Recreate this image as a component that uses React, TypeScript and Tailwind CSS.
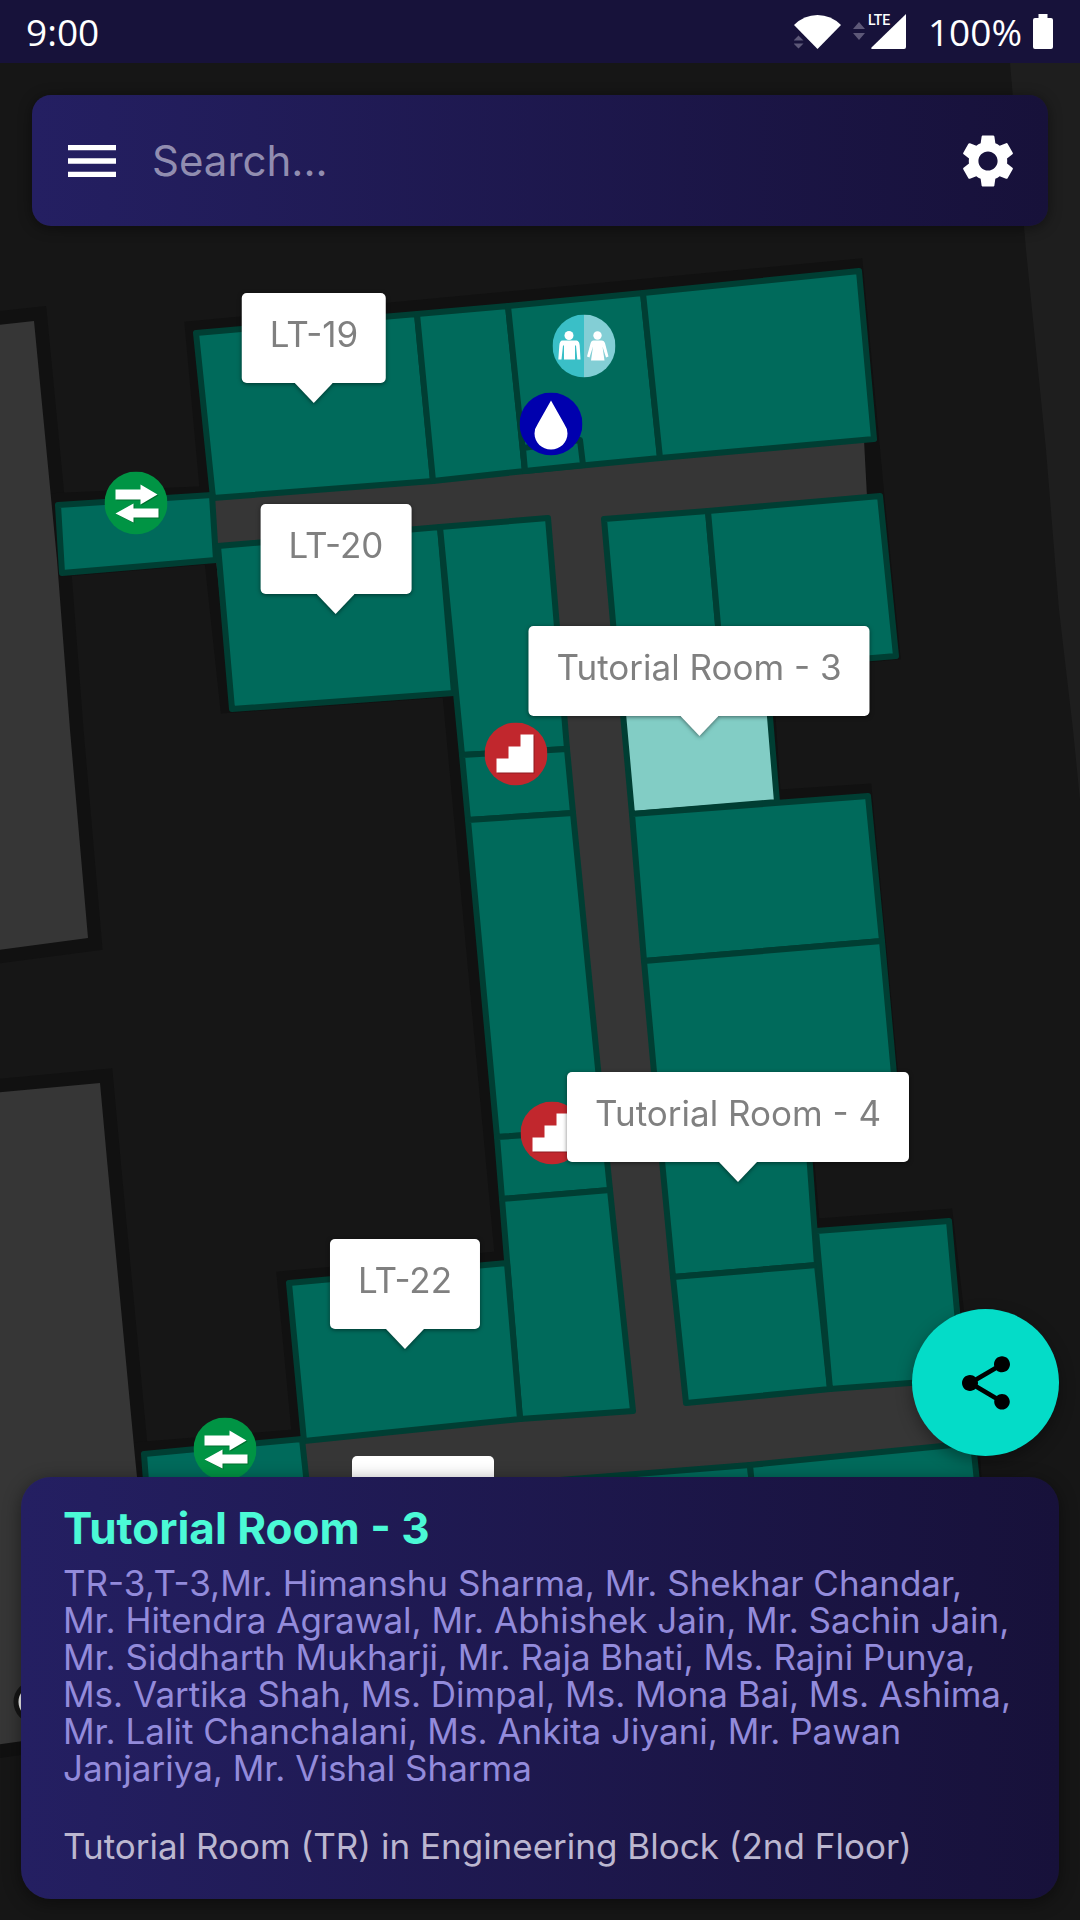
import type { ReactNode } from 'react'
import { MdMenu, MdSettings, MdShare } from 'react-icons/md'

type Poly = { points: string; selected?: boolean }

const rooms: Poly[] = [
  { points: '196,333 417,314 433,481 213,498' },
  { points: '417,314 508,306 525,471 433,481' },
  { points: '508,306 643,293 660,458 525,471' },
  { points: '643,293 859,271 874,439 660,458' },
  { points: '523,448 580,440 583,465 525,471' },
  { points: '58,505 212,495 216,560 62,573' },
  { points: '218,546 440,527 454,693 232,709' },
  { points: '440,527 548,518 567,749 462,755' },
  { points: '462,755 567,749 573,813 468,820' },
  { points: '468,820 573,813 604,1130 497,1137' },
  { points: '497,1137 604,1130 610,1190 502,1199' },
  { points: '502,1199 610,1190 633,1411 520,1419' },
  { points: '289,1283 507,1263 520,1419 304,1441' },
  { points: '144,1454 302,1439 311,1522 150,1536' },
  { points: '604,519 708,511 722,671 618,680' },
  { points: '708,511 880,496 896,656 722,671' },
  { points: '620,680 766,668 777,802 632,814', selected: true },
  { points: '632,814 868,796 882,941 644,961' },
  { points: '644,961 882,941 899,1130 661,1150' },
  { points: '661,1150 808,1138 817,1265 673,1277' },
  { points: '673,1277 817,1265 830,1389 686,1403' },
  { points: '816,1231 949,1221 963,1379 830,1389' },
  { points: '560,1480 750,1465 757,1540 560,1560' },
  { points: '750,1465 973,1443 982,1530 757,1540' },
]

const mainFloor =
  '197,333 859,271 874,439 864,440 867,497 880,496 896,656 768,668 777,802 868,796 899,1130 808,1138 816,1231 949,1221 975,1443 985,1600 140,1600 144,1454 304,1441 289,1283 507,1263 454,693 232,709 216,560 62,573 58,505 212,498'
const mainHalo =
  '197,333 859,271 880,496 896,656 768,668 777,802 868,796 899,1130 808,1138 816,1231 949,1221 975,1443 985,1600 140,1600 144,1454 304,1441 289,1283 507,1263 454,693 232,709 216,560 62,573 58,505 212,498'
const leftUpper = '-40,329 34,321 52,508 57,560 70,730 88,938 -40,955'
const leftLower = '-40,1096 100,1083 107,1160 135,1457 137,1477 158,1722 -40,1750'

function FloorPlan() {
  return (
    <svg className="block h-[1920px] w-[1080px]" viewBox="0 0 1080 1920" aria-hidden="true">
      <rect width="1080" height="1920" fill="#161616" />
      <path d="M1010 63L1026 250L1046 450L1059 610L1073 730L1080 800V63Z" fill="#1e1e1e" />
      <g fill="#111111" stroke="#111111" strokeWidth="27">
        <polygon points={leftUpper} />
        <polygon points={leftLower} />
      </g>
      <polygon points={mainHalo} transform="translate(-4 -4)" fill="#111111" stroke="#111111" strokeWidth="16" />
      <g fill="#363636">
        <polygon points={leftUpper} />
        <polygon points={leftLower} />
        <polygon points={mainFloor} />
      </g>
      <circle cx="35" cy="1702" r="19" fill="#ffffff" stroke="#161616" strokeWidth="5" />
      {rooms.map((r) => (
        <polygon
          key={r.points}
          points={r.points}
          fill={r.selected ? '#82cdc5' : '#006a5b'}
          stroke="#003e33"
          strokeWidth="6"
          strokeLinejoin="round"
        />
      ))}
    </svg>
  )
}

function TransferIcon() {
  return (
    <>
      <circle cx="31.5" cy="31.5" r="31.5" fill="#009444" />
      <g fill="#00702f" transform="translate(1 1)">
        <path d="M11 18H36V13L53 23L36 33V28H11Z" />
        <path d="M54 37H29V32L11 42L29 51V46H54Z" />
      </g>
      <g fill="#ffffff">
        <path d="M11 18H36V13L53 23L36 33V28H11Z" />
        <path d="M54 37H29V32L11 42L29 51V46H54Z" />
      </g>
    </>
  )
}

function StairsIcon() {
  return (
    <>
      <circle cx="31.5" cy="31.5" r="31.5" fill="#c1272d" />
      <path d="M13 37H25V25H37V13H50V51H13Z" fill="#8f1a20" />
      <path d="M12 36H24V24H36V12H49V50H12Z" fill="#ffffff" />
    </>
  )
}

function WaterIcon() {
  return (
    <>
      <circle cx="31.5" cy="31.5" r="31.5" fill="#0000ae" />
      <path d="M31.500 8L44.500 31Q48 36 48 41C48 50 40.500 57 31.500 57C22.500 57 15 50 15 41Q15 36 18.500 31Z" fill="#ffffff" />
    </>
  )
}

function RestroomIcon() {
  return (
    <>
      <path d="M31.500 0A31.500 31.500 0 0 0 31.500 63Z" fill="#3abfc7" />
      <path d="M31.500 0A31.500 31.500 0 0 1 31.500 63Z" fill="#83ced5" />
      <g fill="#ffffff">
        <circle cx="16.500" cy="21" r="4.500" />
        <path d="M10 26H23C26 26 27 28 27.200 31L28 45H24.800L23.500 31H22.500V45H11.500V31H10.500L9 45H5.800L6.800 31C7 28 8 26 10 26Z" />
        <circle cx="45" cy="21" r="4.200" />
        <path d="M41 26H49C51 26 52 27 52.600 29L56 42L53.500 43L50 32L52 46H38.500L40.500 32L37 43L34.500 42L38 29C38.500 27 39.500 26 41 26Z" />
      </g>
    </>
  )
}

const markers: { x: number; y: number; name: string; icon: ReactNode }[] = [
  { x: 136, y: 503, name: 'Passage', icon: <TransferIcon /> },
  { x: 584, y: 346, name: 'Restrooms', icon: <RestroomIcon /> },
  { x: 551, y: 424, name: 'Drinking water', icon: <WaterIcon /> },
  { x: 516, y: 754, name: 'Stairs', icon: <StairsIcon /> },
  { x: 552, y: 1133, name: 'Stairs', icon: <StairsIcon /> },
  { x: 225, y: 1449, name: 'Passage', icon: <TransferIcon /> },
]

const callouts = [
  { x: 314, y: 403, label: 'LT-19' },
  { x: 336, y: 614, label: 'LT-20' },
  { x: 699, y: 736, label: 'Tutorial Room - 3' },
  { x: 738, y: 1182, label: 'Tutorial Room - 4' },
  { x: 405, y: 1349, label: 'LT-22' },
]

function Callout({ label }: { label: string }) {
  return (
    <span className="flex flex-col items-center drop-shadow-[0_1px_2px_rgba(0,0,0,0.5)]">
      <span className="rounded-[5px] bg-white px-7 pt-5 pb-7 text-[35px] leading-[42px] whitespace-nowrap text-[#808080]">
        {label}
      </span>
      <svg className="block h-5 w-[38px]" viewBox="0 0 38 20" aria-hidden="true">
        <path d="M0 0H38L19 20Z" fill="#ffffff" />
      </svg>
    </span>
  )
}

function CampusMap() {
  return (
    <div className="absolute inset-0 overflow-hidden bg-[#161616]">
      <div className="absolute top-0 left-1/2 w-[1080px] -translate-x-1/2">
        <FloorPlan />
        {markers.map((m) => (
          <button
            key={`${m.x}-${m.y}`}
            type="button"
            aria-label={m.name}
            className="absolute -translate-x-1/2 -translate-y-1/2"
            style={{ left: m.x, top: m.y }}
          >
            <svg className="block size-[63px]" viewBox="0 0 63 63" aria-hidden="true">
              {m.icon}
            </svg>
          </button>
        ))}
        {callouts.map((c) => (
          <button
            key={c.label}
            type="button"
            className="absolute -translate-x-1/2 -translate-y-full"
            style={{ left: c.x, top: c.y }}
          >
            <Callout label={c.label} />
          </button>
        ))}
        <div className="absolute top-[1456px] left-[352px] h-[91px] w-[142px] rounded-[5px] bg-white" />
      </div>
    </div>
  )
}

function StatusBar() {
  return (
    <header className="relative flex h-[63px] items-center justify-between bg-[#17123a] pr-[27px] pl-[26px] font-['Open_Sans','Noto_Sans',sans-serif] text-[37px] leading-[50px] text-white">
      <time>9:00</time>
      <div className="flex items-center">
        <svg className="mr-3 block h-[35px] w-[47px]" viewBox="0 0 47 35" aria-label="Wi-Fi">
          <path d="M0 11Q10 1 23.500 1T47 11L23.500 35Z" fill="#ffffff" />
          <path d="M4.500 21.500L9.500 26.500H-.5ZM4.500 34.500L9.500 29.500H-.5Z" fill="#5d5878" />
        </svg>
        <div className="relative mr-[22px]">
          <svg className="block h-[35px] w-[53px]" viewBox="0 0 53 35" aria-label="Mobile signal">
            <path d="M6 8L12 15H0ZM6 26L12 19H0Z" fill="#5d5878" />
            <path d="M53 0V33Q53 35 51 35H19Q17.500 34.500 18.500 33.500Z" fill="#ffffff" />
          </svg>
          <span className="absolute top-0 left-[15px] font-['Roboto',sans-serif] text-[14px] leading-3 font-medium">
            LTE
          </span>
        </div>
        <span className="mr-[11px]">100%</span>
        <svg className="block h-[35px] w-5" viewBox="0 0 20 35" aria-label="Battery full">
          <path d="M5.500 0H14.500V4H18Q20 4 20 6V33Q20 35 18 35H2Q0 35 0 33V6Q0 4 2 4H5.500Z" fill="#ffffff" />
        </svg>
      </div>
    </header>
  )
}

export default function App() {
  return (
    <main className="relative flex min-h-screen flex-col overflow-hidden bg-[#161616] font-['Inter',sans-serif]">
      <CampusMap />
      <StatusBar />
      <form
        role="search"
        className="relative mx-8 mt-8 flex h-[131px] items-center rounded-[19px] bg-linear-to-r from-[#241f62] to-[#17113a] px-7 text-white shadow-[0_2px_14px_rgba(0,0,0,0.45)]"
      >
        <button type="button" aria-label="Menu" className="shrink-0">
          <MdMenu className="size-16" />
        </button>
        <input
          type="search"
          aria-label="Search"
          placeholder="Search..."
          className="ml-7 min-w-0 flex-1 bg-transparent text-[42px] leading-[52px] outline-none placeholder:text-[#918db0]"
        />
        <button type="button" aria-label="Settings" className="shrink-0">
          <MdSettings className="size-16" />
        </button>
      </form>
      <div className="flex-1" />
      <button
        type="button"
        aria-label="Share"
        className="relative mr-[21px] mb-[21px] flex size-[147px] shrink-0 items-center justify-center self-end rounded-full bg-[#04dcc8] text-black shadow-[0_6px_16px_rgba(0,0,0,0.35)]"
      >
        <MdShare className="size-16" />
      </button>
      <section className="relative mx-[21px] mb-[21px] rounded-[30px] bg-linear-to-r from-[#241f62] to-[#17113a] px-[42px] pt-[25px] pb-[34px] shadow-[0_4px_18px_rgba(0,0,0,0.45)]">
        <h1 className="text-[44px] leading-[52px] font-bold text-[#4bf9d6]">Tutorial Room - 3</h1>
        <p className="mt-[11px] text-[35px] leading-[37px] text-[#938bdb]">
          TR-3,T-3,Mr. Himanshu Sharma, Mr. Shekhar Chandar, Mr. Hitendra Agrawal, Mr. Abhishek Jain, Mr. Sachin
          Jain, Mr. Siddharth Mukharji, Mr. Raja Bhati, Ms. Rajni Punya, Ms. Vartika Shah, Ms. Dimpal, Ms. Mona Bai,
          Ms. Ashima, Mr. Lalit Chanchalani, Ms. Ankita Jiyani, Mr. Pawan Janjariya, Mr. Vishal Sharma
        </p>
        <p className="mt-[41px] text-[35px] leading-[37px] text-[#bcb7d0]">
          Tutorial Room (TR) in Engineering Block (2nd Floor)
        </p>
      </section>
    </main>
  )
}
